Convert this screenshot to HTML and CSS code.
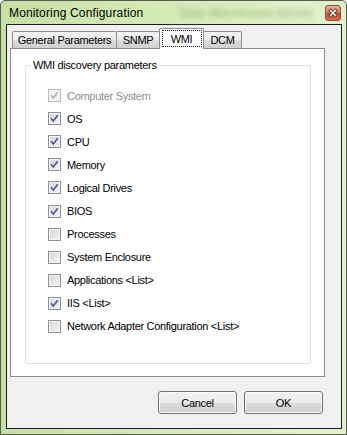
FILE: index.html
```html
<!DOCTYPE html>
<html>
  <head>
    <meta charset="utf-8">
    <title>Monitoring Configuration</title>
    <link rel="stylesheet" href="styles.css">
  </head>
  <body>
    <div class="window">
      <div class="titlebar">
        <span class="titlebar__text">Monitoring Configuration</span>
        <span class="titlebar__ghost">Data Warehouse Server</span>
        <span class="titlebar__close">
          <svg width="16" height="16" viewBox="0 0 16 16">
            <defs>
              <linearGradient id="closeGrad" x1="0" y1="0" x2="0" y2="1">
                <stop offset="0" stop-color="#eab2a4"/>
                <stop offset="0.45" stop-color="#d9826c"/>
                <stop offset="0.5" stop-color="#c94a31"/>
                <stop offset="1" stop-color="#d8704f"/>
              </linearGradient>
            </defs>
            <rect x="0.5" y="0.5" width="15" height="15" rx="2.5" fill="url(#closeGrad)" stroke="#8c5247"/>
            <path d="M5.5 5.5 L10.5 10.5 M10.5 5.5 L5.5 10.5" stroke="#5a2a22" stroke-width="3.2" stroke-linecap="square"/>
            <path d="M5.5 5.5 L10.5 10.5 M10.5 5.5 L5.5 10.5" stroke="#ffffff" stroke-width="1.6" stroke-linecap="square"/>
          </svg>
        </span>
      </div>

      <div class="client">
        <div class="tabs">
          <div class="tabs__strip">
            <div class="tab tab--general">General Parameters</div>
            <div class="tab tab--snmp">SNMP</div>
            <div class="tab tab--wmi tab--active"><span class="tab__focus">WMI</span></div>
            <div class="tab tab--dcm">DCM</div>
          </div>

          <div class="tabs__panel">
            <div class="group">
              <div class="group__label">WMI discovery parameters</div>
              <div class="group__list">
                <div class="option option--disabled">
                  <span class="cb"><svg width="11" height="11" viewBox="0 0 11 11"><path d="M2 5.2 L4.3 8 L8.8 2.3" /></svg></span>Computer System
                </div>
                <div class="option">
                  <span class="cb"><svg width="11" height="11" viewBox="0 0 11 11"><path d="M2 5.2 L4.3 8 L8.8 2.3" /></svg></span>OS
                </div>
                <div class="option">
                  <span class="cb"><svg width="11" height="11" viewBox="0 0 11 11"><path d="M2 5.2 L4.3 8 L8.8 2.3" /></svg></span>CPU
                </div>
                <div class="option">
                  <span class="cb"><svg width="11" height="11" viewBox="0 0 11 11"><path d="M2 5.2 L4.3 8 L8.8 2.3" /></svg></span>Memory
                </div>
                <div class="option">
                  <span class="cb"><svg width="11" height="11" viewBox="0 0 11 11"><path d="M2 5.2 L4.3 8 L8.8 2.3" /></svg></span>Logical Drives
                </div>
                <div class="option">
                  <span class="cb"><svg width="11" height="11" viewBox="0 0 11 11"><path d="M2 5.2 L4.3 8 L8.8 2.3" /></svg></span>BIOS
                </div>
                <div class="option">
                  <span class="cb"></span>Processes
                </div>
                <div class="option">
                  <span class="cb"></span>System Enclosure
                </div>
                <div class="option">
                  <span class="cb"></span>Applications &lt;List&gt;
                </div>
                <div class="option">
                  <span class="cb"><svg width="11" height="11" viewBox="0 0 11 11"><path d="M2 5.2 L4.3 8 L8.8 2.3" /></svg></span>IIS &lt;List&gt;
                </div>
                <div class="option">
                  <span class="cb"></span>Network Adapter Configuration &lt;List&gt;
                </div>
              </div>
            </div>
          </div>
        </div>

        <div class="buttons">
          <button class="btn">Cancel</button>
          <button class="btn">OK</button>
        </div>
      </div>
    </div>
  </body>
</html>
```

FILE: styles.css
```css
html, body {
  margin: 0;
  padding: 0;
  background: #ffffff;
}

.window {
  width: 347px;
  height: 435px;
  box-sizing: border-box;
  border: 1px solid #555b55;
  border-radius: 5px 5px 0 0;
  background: linear-gradient(to right, #c7dfa2 0%, #d3eab3 40%, #e2f2cb 100%);
  font-family: "Liberation Sans", Arial, sans-serif;
  font-size: 11px;
  color: #000;
}

.titlebar {
  height: 23px;
  display: flex;
  align-items: center;
  padding: 0 5px 0 8px;
}

.titlebar__text {
  font-size: 12px;
  letter-spacing: 0.15px;
}

.titlebar__ghost {
  margin-left: 36px;
  font-size: 12px;
  font-weight: bold;
  color: transparent;
  text-shadow: 0 0 5px rgba(90, 120, 70, 0.35);
}

.titlebar__close {
  margin-left: auto;
  width: 16px;
  height: 16px;
  display: flex;
}

.client {
  width: 336px;
  height: 405px;
  box-sizing: border-box;
  margin-left: 5px;
  border: 1px solid #1d1d1d;
  background: #f0f0f0;
}

.tabs {
  width: 315px;
  margin-left: 3px;
}

.tabs__strip {
  height: 23px;
  display: flex;
  align-items: flex-end;
  padding-left: 2px;
}

.tab {
  height: 17px;
  box-sizing: border-box;
  border: 1px solid #898c95;
  border-bottom: none;
  border-radius: 2px 2px 0 0;
  background: linear-gradient(#f3f3f3 0%, #ebebeb 50%, #dddddd 51%, #cfcfcf 100%);
  display: flex;
  align-items: center;
  justify-content: center;
  letter-spacing: -0.3px;
  position: relative;
}

.tab--general { width: 105px; }
.tab--snmp { width: 44px; margin-left: -1px; }
.tab--wmi { width: 45px; margin-left: -1px; }
.tab--dcm { width: 39px; margin-left: -1px; }

.tab--active {
  height: 21px;
  margin-bottom: -1px;
  background: #ffffff;
  z-index: 1;
  align-items: flex-start;
  padding-top: 1px;
}

.tab__focus {
  width: 40px;
  height: 17px;
  box-sizing: border-box;
  border: 1px dotted #202020;
  display: flex;
  align-items: center;
  justify-content: center;
}

.tabs__panel {
  height: 329px;
  box-sizing: border-box;
  border: 1px solid #898c95;
  background: #ffffff;
  padding: 16px 0 0 14px;
}

.group {
  width: 286px;
  height: 299px;
  box-sizing: border-box;
  border: 1px solid #d5dfe5;
  border-radius: 3px;
}

.group__label {
  width: fit-content;
  margin: -7px 0 0 5px;
  padding: 0 2px;
  line-height: 13px;
  background: #ffffff;
  letter-spacing: -0.3px;
}

.group__list {
  margin-top: 12px;
  padding-left: 22px;
}

.option {
  height: 23.1px;
  display: flex;
  align-items: center;
  letter-spacing: -0.3px;
}

.cb {
  width: 13px;
  height: 13px;
  box-sizing: border-box;
  margin-right: 6px;
  border: 1px solid #8e8f8f;
  background: linear-gradient(135deg, #d2d6dc 0%, #f4f4f4 100%);
  box-shadow: inset 0 0 0 1px #f6f6f6;
  display: flex;
}

.cb svg path {
  fill: none;
  stroke: #4a5d92;
  stroke-width: 1.7;
}

.option--disabled {
  color: #8d8d8d;
}

.option--disabled .cb {
  border-color: #bcbcbc;
  background: #f4f4f4;
}

.option--disabled .cb svg path {
  stroke: #b4b4b4;
}

.buttons {
  margin-top: 14px;
  display: flex;
  justify-content: flex-end;
  gap: 7px;
  padding-right: 18px;
}

.btn {
  width: 79px;
  height: 23px;
  margin: 0;
  padding: 0;
  border: 1px solid #707070;
  border-radius: 3px;
  background: linear-gradient(#f2f2f2 0%, #ebebeb 50%, #dddddd 51%, #cfcfcf 100%);
  box-shadow: inset 0 0 0 1px #fbfbfb;
  font-family: "Liberation Sans", Arial, sans-serif;
  font-size: 11px;
  letter-spacing: -0.3px;
  color: #000;
}
```
